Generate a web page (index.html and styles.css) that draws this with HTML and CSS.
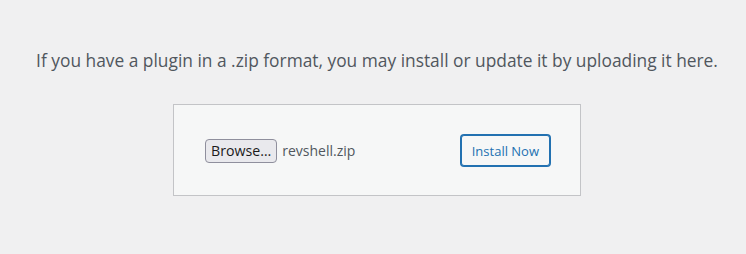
FILE: index.html
```html
<!DOCTYPE html>
<html lang="en">
<head>
    <meta charset="UTF-8">
    <title>Upload Plugin</title>
    <link rel="stylesheet" href="styles.css">
</head>
<body>
<div class="upload-plugin">
    <p class="install-help">If you have a plugin in a .zip format, you may install or update it by uploading it here.</p>
    <form class="upload-form">
        <div class="file-field">
            <span class="browse-btn">Browse…</span>
            <span class="file-name">revshell.zip</span>
        </div>
        <button type="button" class="install-btn">Install Now</button>
    </form>
</div>
</body>
</html>
```

FILE: styles.css
```css
body {
    font-family: 'Open Sans', 'Noto Sans', sans-serif;
    background-color: #f0f0f1;
    margin: 0;
    color: #50575e;
}

.upload-plugin {
    display: flex;
    flex-direction: column;
    align-items: center;
    padding: 48px 0 0 8px;
}

.install-help {
    font-size: 17.35px;
    margin: 0;
    line-height: 24px;
}

.upload-form {
    display: flex;
    justify-content: space-between;
    align-items: center;
    width: 345px;
    margin-top: 32px;
    padding: 30px 30px 29px 31px;
    background-color: #f6f7f7;
    border: 1px solid #c3c4c7;
}

.file-field {
    display: flex;
    align-items: center;
    gap: 5px;
    font-size: 14px;
}

.browse-btn {
    display: inline-block;
    height: 22px;
    line-height: 22px;
    padding: 0 5px;
    background-color: #e9e9ed;
    border: 1px solid #8f8f9d;
    border-radius: 4px;
    color: #1b1b1b;
    font-size: 14.2px;
}

.file-name {
    color: #50575e;
}

.install-btn {
    font-family: inherit;
    font-size: 13px;
    height: 31px;
    padding: 0 10px;
    background-color: #f6f7f7;
    color: #2271b1;
    border: 1px solid #2271b1;
    box-shadow: 0 0 0 1px #2271b1;
    border-radius: 3px;
    cursor: pointer;
}
```
